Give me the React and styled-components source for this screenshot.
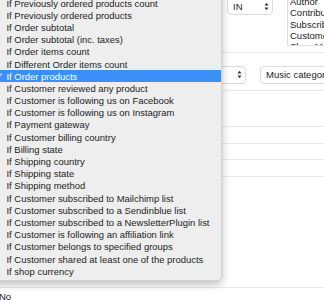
import React from "react";
import styled, { createGlobalStyle } from "styled-components";

const Global = createGlobalStyle`
  html, body { margin: 0; padding: 0; background: #fff; }
  body { width: 324px; height: 300px; overflow: hidden; position: relative;
    font-family: "Liberation Sans", Arial, sans-serif; color: #222; }
`;

const Page = styled.div`
  margin-top: -29px;
  display: flex;
  flex-direction: column;
  font-size: 9.5px;
`;

const Row = styled.div`
  display: flex;
  align-items: flex-start;
  height: ${(p) => p.$h}px;
  padding-top: ${(p) => p.$pt || 0}px;
  border-bottom: 1px solid #e8e8e8;
  box-sizing: border-box;
`;

const Cell = styled.div`
  flex: none;
  width: ${(p) => (p.$w ? `${p.$w}px` : "auto")};
  margin-top: ${(p) => p.$mt || 0}px;
`;

const Select = styled.div`
  box-sizing: border-box;
  display: flex;
  align-items: center;
  justify-content: space-between;
  height: 18px;
  width: ${(p) => p.$w}px;
  padding: 0 3px 0 ${(p) => p.$pl || 5}px;
  background: #fff;
  border: 1px solid #dcdcdc;
  border-radius: 4px;
  font-size: 9.5px;
  color: #222;
  white-space: nowrap;
  overflow: hidden;
`;

const Arrows = () => (
  <svg width="5" height="9" viewBox="0 0 5 9">
    <path d="M0.5 3.5 L2.5 0.8 L4.5 3.5 Z M0.5 5.5 L2.5 8.2 L4.5 5.5 Z" fill="#333" />
  </svg>
);

const ListBox = styled.div`
  box-sizing: border-box;
  width: 80px;
  height: 75px;
  padding: 1.5px 0 0 2px;
  border: 1px solid #dcdcdc;
  background: #fff;
  overflow: hidden;
`;

const ListOption = styled.div`
  height: 11.3px;
  line-height: 11.3px;
  font-size: 9.5px;
  white-space: nowrap;
`;

const Footer = styled.div`
  padding-top: 3px;
  font-size: 9.5px;
  margin-left: -1px;
`;

const Menu = styled.div`
  position: absolute;
  left: -12px;
  top: -10px;
  width: 234px;
  box-sizing: border-box;
  padding: 6px 0 3px;
  background: #eeeeee;
  border: 1px solid rgba(0, 0, 0, 0.12);
  border-radius: 5px;
  box-shadow: 0 3px 9px rgba(0, 0, 0, 0.28);
  font-size: 9.45px;
  z-index: 10;
`;

const Item = styled.div`
  display: flex;
  align-items: center;
  height: 12.2px;
  padding-left: 5.5px;
  white-space: nowrap;
  color: ${(p) => (p.$active ? "#fff" : "#222")};
  background: ${(p) => (p.$active ? "#3b8ff7" : "transparent")};
`;

const CheckSlot = styled.span`
  flex: none;
  width: 12px;
  font-family: "DejaVu Sans", sans-serif;
  font-size: 9px;
  text-indent: 1.5px;
`;

const items = [
  "If Previously ordered products count",
  "If Previously ordered products",
  "If Order subtotal",
  "If Order subtotal (inc. taxes)",
  "If Order items count",
  "If Different Order items count",
  "If Order products",
  "If Customer reviewed any product",
  "If Customer is following us on Facebook",
  "If Customer is following us on Instagram",
  "If Payment gateway",
  "If Customer billing country",
  "If Billing state",
  "If Shipping country",
  "If Shipping state",
  "If Shipping method",
  "If Customer subscribed to Mailchimp list",
  "If Customer subscribed to a Sendinblue list",
  "If Customer subscribed to a NewsletterPlugin list",
  "If Customer is following an affiliation link",
  "If Customer belongs to specified groups",
  "If Customer shared at least one of the products",
  "If shop currency",
];

const roles = ["Administrator", "Editor", "Author", "Contributor", "Subscriber", "Customer", "Shop Manager"];

export default function App() {
  return (
    <>
      <Global />
      <Page>
        <Row $h={82}>
          <Cell $w={227} />
          <Cell $mt={26}>
            <Select $w={46}>
              IN
              <Arrows />
            </Select>
          </Cell>
          <Cell $w={14} />
          <Cell>
            <ListBox>
              {roles.map((r) => (
                <ListOption key={r}>{r}</ListOption>
              ))}
            </ListBox>
          </Cell>
        </Row>
        <Row $h={38} $pt={12.7}>
          <Cell $w={156} />
          <Cell>
            <Select $w={90}>
              Products
              <Arrows />
            </Select>
          </Cell>
          <Cell $w={14} />
          <Cell>
            <Select $w={90}>Music category</Select>
          </Cell>
        </Row>
        <Row $h={36} />
        <Row $h={17} />
        <Row $h={16} />
        <Row $h={17} />
        <Row $h={111} />
        <Footer>No</Footer>
      </Page>
      <Menu>
        {items.map((t, i) => (
          <Item key={t} $active={i === 6}>
            <CheckSlot>{i === 6 ? "✓" : ""}</CheckSlot>
            {t}
          </Item>
        ))}
      </Menu>
    </>
  );
}
